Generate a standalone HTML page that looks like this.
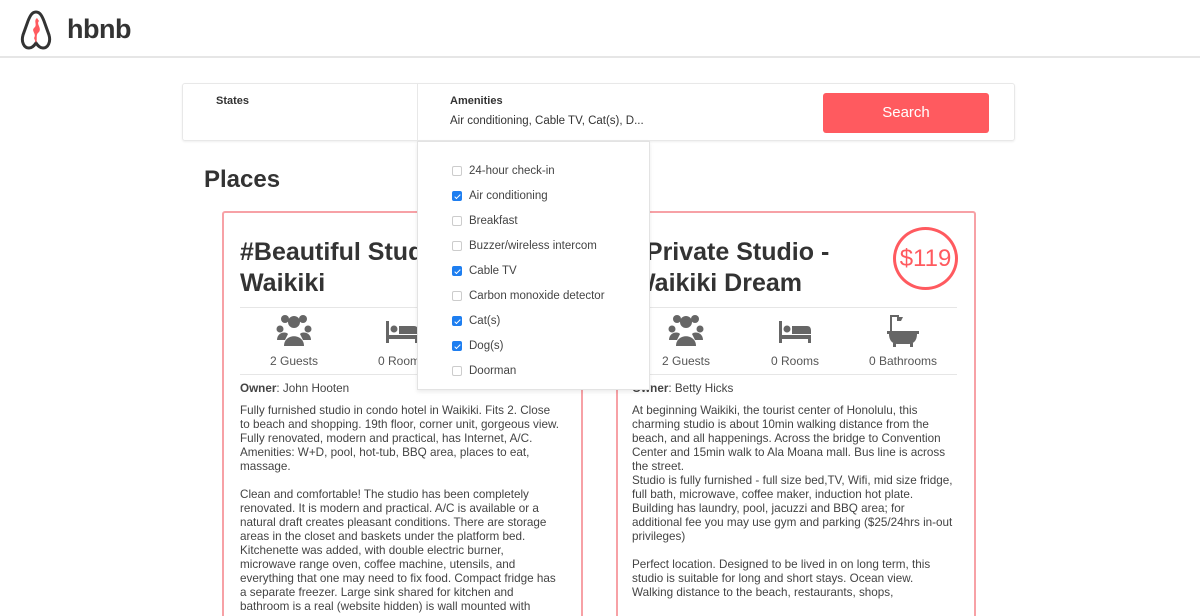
<!DOCTYPE html>
<html style="width:1200px;height:616px;overflow:hidden"><head><meta charset="utf-8"><style>
*{margin:0;padding:0;box-sizing:border-box}
body{width:1200px;height:616px;overflow:hidden;background:#fff;font-family:"Liberation Sans",Arial,sans-serif;color:#333;position:relative}
.a{position:absolute}
.hdr{left:0;top:0;width:1200px;height:58px;border-bottom:2px solid #e6e6e6}
.logo{left:67px;top:14px;font-size:27px;font-weight:bold;color:#333;letter-spacing:-0.5px}
.sb{left:182px;top:83px;width:833px;height:58px;border:1px solid #e8e8e8;border-radius:3px;box-shadow:0 1px 2px #eee}
.lbl{font-size:11px;font-weight:bold;color:#333}
.btn{left:823px;top:93px;width:166px;height:40px;background:#ff5a5f;border-radius:3px;color:#fff;font-size:15px;text-align:center;line-height:40px}
.card{border:2px solid #f7a1a6;border-radius:3px;background:#fff}
.title{font-size:25px;font-weight:bold;line-height:31px;color:#333}
.hr{height:1px;background:#e6e6e6}
.ic{width:108px;text-align:center;font-size:12px;color:#555}
.txt{font-size:11.7px;line-height:14px;color:#444}
.dd{left:417px;top:141px;width:233px;height:249px;background:#fff;border:1px solid #e3e3e3;box-shadow:0 2px 4px rgba(0,0,0,.08)}
.it{position:absolute;left:51px;font-size:11.5px;color:#444}
.cb{position:absolute;left:-17px;top:1px;width:10px;height:10px;border:1px solid #ccc;border-radius:2px;background:#fff}
.cb.on{background:#1e7ef0;border-color:#1e7ef0}
.cb.on::after{content:"";position:absolute;left:3px;top:1px;width:2px;height:5px;border:solid #fff;border-width:0 1.5px 1.5px 0;transform:rotate(45deg)}
</style></head><body>
<div class="a hdr"></div>
<svg class="a" style="left:20px;top:9px" width="32" height="42" viewBox="0 0 32 42"><path d="M16 3 C12 3 10 7 8 12 L3 26 C1 33 4 39 9 39 C12 39 14 37 16 34 C18 37 20 39 23 39 C28 39 31 33 29 26 L24 12 C22 7 20 3 16 3Z" fill="none" stroke="#333" stroke-width="3"/><path d="M17 9 C13 12 18 16 14 19 C11 22 17 25 14 29 L16 34 C18 30 15 26 19 23 C22 19 16 15 19 12Z" fill="#ff5a5f"/></svg>
<div class="a logo">hbnb</div>

<div class="a sb"></div>
<div class="a" style="left:417px;top:84px;width:1px;height:57px;background:#e8e8e8"></div>
<div class="a lbl" style="left:216px;top:95px">States</div>
<div class="a lbl" style="left:450px;top:95px">Amenities</div>
<div class="a" style="left:450px;top:115px;font-size:11.5px;color:#333">Air conditioning, Cable TV, Cat(s), D...</div>
<div class="a btn">Search</div>

<div class="a" style="left:204px;top:166px;font-size:24px;font-weight:bold;color:#333">Places</div>

<div class="a card" style="left:222px;top:211px;width:361px;height:440px"></div>
<div class="a title" style="left:240px;top:237px;width:330px;white-space:nowrap">#Beautiful Studio<br>Waikiki</div>
<div class="a hr" style="left:240px;top:307px;width:325px"></div>
<div class="a hr" style="left:240px;top:374px;width:325px"></div>
<div class="a ic" style="left:240px;top:313px"><svg width="36" height="34" viewBox="0 0 36 34"><g fill="#666"><circle cx="9" cy="6" r="4"/><circle cx="27" cy="6" r="4"/><circle cx="18" cy="9" r="6"/><circle cx="4" cy="16" r="3.5"/><circle cx="32" cy="16" r="3.5"/><path d="M8 33 C8 20 28 20 28 33Z"/><path d="M1 27 C1 19 10 18 12 21 L9 27Z"/><path d="M35 27 C35 19 26 18 24 21 L27 27Z"/></g></svg><div style="margin-top:4px">2 Guests</div></div>
<div class="a ic" style="left:348px;top:313px"><svg width="36" height="34" viewBox="0 0 36 34"><g fill="#666"><rect x="2" y="8" width="3" height="22"/><rect x="2" y="22" width="32" height="4"/><rect x="31" y="22" width="3" height="8"/><circle cx="10" cy="16" r="3.5"/><path d="M15 13 H30 C33 13 34 15 34 18 V21 H15Z"/></g></svg><div style="margin-top:4px">0 Rooms</div></div>
<div class="a txt" style="left:240px;top:382px"><b>Owner</b>: John Hooten</div>
<div class="a txt" style="left:240px;top:404px;white-space:nowrap">Fully furnished studio in condo hotel in Waikiki. Fits 2. Close<br>to beach and shopping. 19th floor, corner unit, gorgeous view.<br>Fully renovated, modern and practical, has Internet, A/C.<br>Amenities: W+D, pool, hot-tub, BBQ area, places to eat,<br>massage.<br><br>Clean and comfortable! The studio has been completely<br>renovated. It is modern and practical. A/C is available or a<br>natural draft creates pleasant conditions. There are storage<br>areas in the closet and baskets under the platform bed.<br>Kitchenette was added, with double electric burner,<br>microwave range oven, coffee machine, utensils, and<br>everything that one may need to fix food. Compact fridge has<br>a separate freezer. Large sink shared for kitchen and<br>bathroom is a real (website hidden) is wall mounted with</div>

<div class="a card" style="left:616px;top:211px;width:360px;height:440px"></div>
<div class="a title" style="left:632px;top:237px;white-space:nowrap">#Private Studio -<br>Waikiki Dream</div>
<div class="a" style="left:893px;top:227px;width:65px;height:63px;border:3px solid #ff5a5f;border-radius:50%;color:#ff5a5f;font-size:24px;text-align:center;line-height:57px;background:#fff">$119</div>
<div class="a hr" style="left:632px;top:307px;width:325px"></div>
<div class="a hr" style="left:632px;top:374px;width:325px"></div>
<div class="a ic" style="left:632px;top:313px"><svg width="36" height="34" viewBox="0 0 36 34"><g fill="#666"><circle cx="9" cy="6" r="4"/><circle cx="27" cy="6" r="4"/><circle cx="18" cy="9" r="6"/><circle cx="4" cy="16" r="3.5"/><circle cx="32" cy="16" r="3.5"/><path d="M8 33 C8 20 28 20 28 33Z"/><path d="M1 27 C1 19 10 18 12 21 L9 27Z"/><path d="M35 27 C35 19 26 18 24 21 L27 27Z"/></g></svg><div style="margin-top:4px">2 Guests</div></div>
<div class="a ic" style="left:741px;top:313px"><svg width="36" height="34" viewBox="0 0 36 34"><g fill="#666"><rect x="2" y="8" width="3" height="22"/><rect x="2" y="22" width="32" height="4"/><rect x="31" y="22" width="3" height="8"/><circle cx="10" cy="16" r="3.5"/><path d="M15 13 H30 C33 13 34 15 34 18 V21 H15Z"/></g></svg><div style="margin-top:4px">0 Rooms</div></div>
<div class="a ic" style="left:849px;top:313px"><svg width="36" height="34" viewBox="0 0 36 34"><g fill="#666"><rect x="5" y="2" width="2" height="18"/><path d="M5 2 H14 V4 H7Z"/><path d="M12 4 H18 L16 8 H12Z"/><rect x="2" y="18" width="32" height="3"/><path d="M4 21 H32 C32 28 28 31 24 31 H12 C8 31 4 28 4 21Z"/><rect x="8" y="30" width="3" height="4"/><rect x="25" y="30" width="3" height="4"/></g></svg><div style="margin-top:4px">0 Bathrooms</div></div>
<div class="a txt" style="left:632px;top:382px"><b>Owner</b>: Betty Hicks</div>
<div class="a txt" style="left:632px;top:404px;white-space:nowrap">At beginning Waikiki, the tourist center of Honolulu, this<br>charming studio is about 10min walking distance from the<br>beach, and all happenings. Across the bridge to Convention<br>Center and 15min walk to Ala Moana mall. Bus line is across<br>the street.<br>Studio is fully furnished - full size bed,TV, Wifi, mid size fridge,<br>full bath, microwave, coffee maker, induction hot plate.<br>Building has laundry, pool, jacuzzi and BBQ area; for<br>additional fee you may use gym and parking ($25/24hrs in-out<br>privileges)<br><br>Perfect location. Designed to be lived in on long term, this<br>studio is suitable for long and short stays. Ocean view.<br>Walking distance to the beach, restaurants, shops,</div>

<div class="a dd">
<div class="it" style="top:23px"><span class="cb"></span>24-hour check-in</div>
<div class="it" style="top:48px"><span class="cb on"></span>Air conditioning</div>
<div class="it" style="top:73px"><span class="cb"></span>Breakfast</div>
<div class="it" style="top:98px"><span class="cb"></span>Buzzer/wireless intercom</div>
<div class="it" style="top:123px"><span class="cb on"></span>Cable TV</div>
<div class="it" style="top:148px"><span class="cb"></span>Carbon monoxide detector</div>
<div class="it" style="top:173px"><span class="cb on"></span>Cat(s)</div>
<div class="it" style="top:198px"><span class="cb on"></span>Dog(s)</div>
<div class="it" style="top:223px"><span class="cb"></span>Doorman</div>
</div>
</body></html>
